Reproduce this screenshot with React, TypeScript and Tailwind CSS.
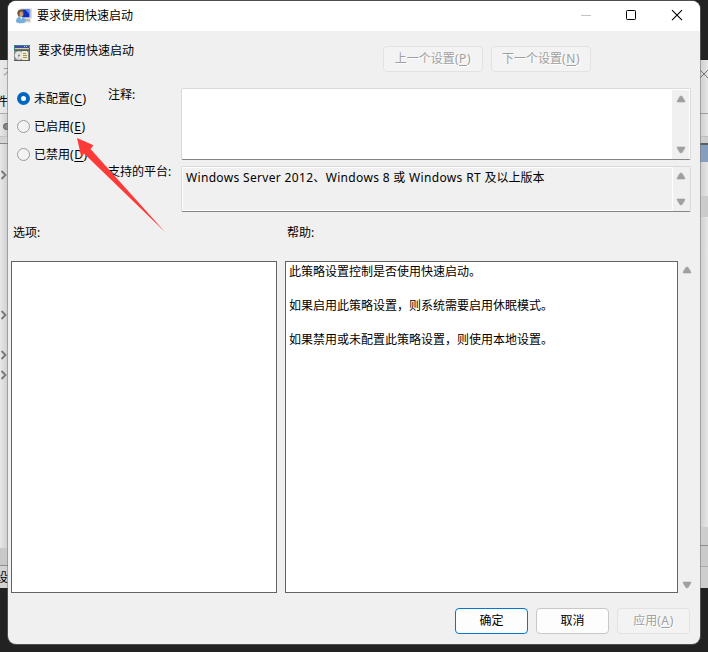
import type { ReactNode } from 'react'

const chevrons = [175, 315, 355, 375]

const options = [
  { label: '未配置', hotkey: 'C', checked: true },
  { label: '已启用', hotkey: 'E', checked: false },
  { label: '已禁用', hotkey: 'D', checked: false },
]

const helpLines = [
  '此策略设置控制是否使用快速启动。',
  '如果启用此策略设置，则系统需要启用休眠模式。',
  '如果禁用或未配置此策略设置，则使用本地设置。',
]

function Hotkey({ label, k }: { label: string; k: string }) {
  return (
    <span>
      {label}
      <span className="tracking-[0.6px]">
        (<span className="underline underline-offset-2">{k}</span>)
      </span>
    </span>
  )
}

function Arrow({ down = false }: { down?: boolean }) {
  return (
    <svg width="10" height="8" viewBox="0 0 10 8" className={down ? 'rotate-180' : ''}>
      <path d="M4 1.2h2L8.8 6v1H1.2V6z" fill="#a0a0a0" stroke="#a0a0a0" strokeWidth="0.6" strokeLinejoin="round" />
    </svg>
  )
}

function ScrollTrack({ className = '' }: { className?: string }) {
  return (
    <div className={`flex shrink-0 flex-col items-center justify-between bg-[#f0f0f0] ${className}`}>
      <Arrow />
      <Arrow down />
    </div>
  )
}

function DisabledButton({ className, children }: { className: string; children: ReactNode }) {
  return (
    <button
      disabled
      className={`flex h-[26px] items-center justify-center rounded border border-[#e2e2e2] bg-[#f3f3f3] text-[#a0a0a0] [text-shadow:1px_1px_0_#fff] ${className}`}
    >
      {children}
    </button>
  )
}

function ConsoleIcon() {
  return (
    <svg width="16" height="16" viewBox="0 0 16 16">
      <path d="M4.500.5h11.300v10.300H4.500z" fill="#d6d5cc" />
      <path d="M5.500 1.500h8v7.800h-8z" fill="#0c2fc0" />
      <path d="M9 1.500h4.500v4.800z" fill="#5f8cf2" />
      <path d="M13.500 1.500h1v7.800h-1z" fill="#94a8d8" />
      <path d="M9 11h4.500l1.500 2.500H9z" fill="#b5b3ab" />
      <path d="M9 13.500h6v1H9z" fill="#d9d8d2" />
      <path d="M1.300 5.500C1.300 3 2.700 1.600 4.800 1.600S8 3.200 7.700 5.500L7 8.500H2.300z" fill="#6b563d" />
      <ellipse cx="5.300" cy="6.200" rx="1.900" ry="2.700" fill="#cf9c78" />
      <path d="M0 14c0-3.700 1.600-5.200 4.500-5.200S9.600 10.300 9.800 14c-2.300 1.700-7.500 1.700-9.800 0z" fill="#75b0dc" />
      <path d="M4 9 5.500 11.800 6.300 9z" fill="#eaf4fb" />
    </svg>
  )
}

function PolicyIcon() {
  return (
    <svg width="16" height="16" viewBox="0 0 16 16" shapeRendering="crispEdges">
      <path d="M0 0h16v16H0z" fill="#8a8d8c" />
      <path d="M0 0h16v1H0zM0 0h1v6H0z" fill="#3c8080" />
      <path d="M1 1h14v2H1z" fill="#3b4aa6" />
      <path d="M10 1h1v1h-1zM12 1h1v1h-1z" fill="#c9d0ee" />
      <path d="M1 3h14v1H1z" fill="#d8cfa0" />
      <path d="M1 4h14v1H1z" fill="#6f7476" />
      <path d="M1 5h14v1H1z" fill="#44665f" />
      <circle cx="5" cy="10.500" r="4.200" fill="#e6e8e6" shapeRendering="auto" />
      <path d="M5 10.500 8 7.600A4 4 0 0 0 5 6.500z" fill="#cfe3cd" shapeRendering="auto" />
      <path d="M5 10.500 2.200 13.500A4 4 0 0 0 5 14.500z" fill="#dccfde" shapeRendering="auto" />
      <circle cx="5" cy="10.500" r="1" fill="#71807a" shapeRendering="auto" />
      <path d="M8 6h5v1h1v8H8z" fill="#f3eccb" />
      <path d="M9 8h3v1H9zM9 10h4v1H9zM9 12h4v1H9z" fill="#9c9068" />
      <path d="M0 15h16v1H0zM15 3h1v13h-1z" fill="#55605e" />
    </svg>
  )
}

// The window behind the dialog, only its left and right edges stay visible
function BackWindow() {
  return (
    <div className="absolute left-0 top-[60px] flex h-[528px] w-[708px] justify-between overflow-hidden bg-[#e4e4e4]">
      <div className="relative h-full w-2 bg-gradient-to-r from-[#e8e8e8] to-[#cfcfcf]">
        <div className="flex h-full flex-col">
          <div className="h-[54px] border-b border-[#a9a9ad] bg-[#e9e9e9]/70" />
          <div className="h-[23px] border-b border-[#c4c4c4]" />
          <div className="h-[7px] border-b border-[#85858c] bg-[#d4d4d4]" />
          <div className="flex-1" />
          <div className="h-[18px] border-b border-[#8d8d92] bg-[#c8c8c8]" />
          <div className="h-[22px] bg-[#d2d2d2]" />
        </div>
        <span className="absolute left-[3px] top-[6px] text-[#999]">不</span>
        <span className="absolute -left-1 top-[34px]">件</span>
        <span className="absolute left-[3px] top-[63px] h-[7px] w-2 rounded-sm border border-[#555] bg-[#888]" />
        <span className="absolute -left-1 top-[510px]">设</span>
        {chevrons.map((y) => (
          <svg key={y} width="7" height="10" viewBox="0 0 7 10" className="absolute left-0" style={{ top: y - 65 }}>
            <path d="M1.500 1 5.500 5l-4 4" fill="none" stroke="#777" strokeWidth="1.800" />
          </svg>
        ))}
      </div>
      <div className="relative flex h-full w-2 flex-col overflow-hidden bg-gradient-to-r from-[#cfcfcf] to-[#e6e6e6]">
        <svg width="10" height="10" viewBox="0 0 10 10" className="absolute left-0 top-[9px]">
          <path d="M0 1l8 8M8 1 0 9" stroke="#777" fill="none" />
        </svg>
        <div className="h-[54px] border-b border-[#a0a0a4]" />
        <div className="h-[23px] border-b border-[#bdbdbd]" />
        <div className="h-2 border-b-2 border-[#5e5e62] bg-[#cdcdcd]" />
        <div className="h-[17px] bg-[#869fbe]" />
        <div className="h-[34px]" />
        <div className="h-[21px] bg-[#cbcbcb]" />
        <div className="flex-1" />
        <div className="h-[19px] border-b border-[#8c8c90] bg-[#cdcdcd]" />
        <div className="h-[21px] border-b border-[#aaa] bg-[#cacaca]" />
        <div className="h-[21px] bg-[#cecece]" />
      </div>
    </div>
  )
}

function TitleBar() {
  return (
    <div className="flex h-[30px] shrink-0 items-center bg-white pl-2">
      <ConsoleIcon />
      <span className="ml-[5px]">要求使用快速启动</span>
      <div className="ml-auto flex items-center">
        <svg width="46" height="30" viewBox="0 0 46 30">
          <path d="M19 14.500h10" stroke="#c4c4c4" />
        </svg>
        <svg width="46" height="30" viewBox="0 0 46 30">
          <rect x="18.500" y="9.500" width="9" height="9" rx="0.800" fill="none" stroke="#000" />
        </svg>
        <svg width="46" height="30" viewBox="0 0 46 30">
          <path d="M18 9.200 28 19.200M28 9.200 18 19.200" stroke="#000" fill="none" strokeWidth="1.100" />
        </svg>
      </div>
    </div>
  )
}

export default function App() {
  return (
    <div className="relative h-[652px] w-[708px] overflow-hidden bg-[#222] font-['Noto_Sans','Noto_Sans_CJK_SC',sans-serif] text-xs leading-4 text-black">
      <BackWindow />

      <div className="absolute left-2 top-px flex h-[643px] w-[692px] flex-col overflow-hidden rounded-lg bg-[#f0f0f0] shadow-[0_0_0_1px_#77777788]">
        <TitleBar />

        <div className="flex h-[57px] shrink-0 pl-1.5 pt-[14px]">
          <PolicyIcon />
          <span className="ml-2 -mt-0.5">要求使用快速启动</span>
          <div className="ml-[249px] mt-px flex gap-2">
            <DisabledButton className="w-[100px]"><Hotkey label="上一个设置" k="P" /></DisabledButton>
            <DisabledButton className="w-[100px]"><Hotkey label="下一个设置" k="N" /></DisabledButton>
          </div>
        </div>

        <div className="flex h-[124px] shrink-0">
          <div className="flex w-[100px] shrink-0 flex-col gap-3 pl-[9px] pt-[3px]">
            {options.map((o) => (
              <label key={o.hotkey} className="flex h-4 gap-1">
                <span
                  className={
                    o.checked
                      ? 'mt-px size-[13px] rounded-full border-4 border-[#0067c0] bg-white'
                      : 'mt-px size-[13px] rounded-full border border-[#9b9b9b] bg-[#f3f3f3]'
                  }
                />
                <Hotkey label={o.label} k={o.hotkey} />
              </label>
            ))}
          </div>
          <div className="flex w-[73px] shrink-0 flex-col whitespace-nowrap">
            <span className="-mt-px h-[77px]">注释:</span>
            <span>支持的平台:</span>
          </div>
          <div className="flex w-[510px] flex-col gap-1.5">
            <div className="flex h-[72px] justify-end rounded-[2px] border border-[#dadada] border-b-[#858585] bg-white pr-px pt-px">
              <ScrollTrack className="w-[17px] py-[5px]" />
            </div>
            <div className="flex h-[46px] justify-between rounded-[2px] border border-[#dadada] border-b-[#858585] pr-px shadow-[inset_1px_1px_0_#fff,inset_0_-1px_0_#fff]">
              <span className="whitespace-nowrap pl-1 pt-[3px] tracking-[0.33px]">
                Windows Server 2012、Windows 8 或 Windows RT <span className="tracking-normal">及以上版本</span>
              </span>
              <ScrollTrack className="w-[17px] border-l border-white py-[5px]" />
            </div>
          </div>
        </div>

        <div className="flex h-[49px] shrink-0 pl-[5px] pt-[13px]">
          <span className="w-[274px]">选项:</span>
          <span>帮助:</span>
        </div>

        <div className="flex h-[332px] shrink-0 pl-[3px]">
          <div className="w-[266px] border border-[#646464] bg-white" />
          <div className="ml-2 w-[393px] border border-[#646464] bg-white pl-[3px] pt-0.5">
            {helpLines.map((line) => (
              <p key={line} className="mb-[18px]">{line}</p>
            ))}
          </div>
          <ScrollTrack className="w-[17px] pb-1 pt-[5px]" />
        </div>

        <div className="flex justify-end gap-2 pr-2.5 pt-[15px]">
          <button className="h-[26px] w-[73px] rounded border border-[#0078d4] bg-[#fdfdfd]">确定</button>
          <button className="h-[26px] w-[73px] rounded border border-[#c8c8c8] bg-[#fdfdfd]">取消</button>
          <DisabledButton className="w-[73px]"><Hotkey label="应用" k="A" /></DisabledButton>
        </div>
      </div>

      {/* pointer arrow over the "enabled" option */}
      <svg width="90" height="98" viewBox="0 0 90 98" className="absolute left-[76px] top-[136px]">
        <path d="M1 2 17.500 9.300 14.500 13 89 96 8 17.500 5.500 21.500z" fill="#fd3a38" />
      </svg>
    </div>
  )
}
